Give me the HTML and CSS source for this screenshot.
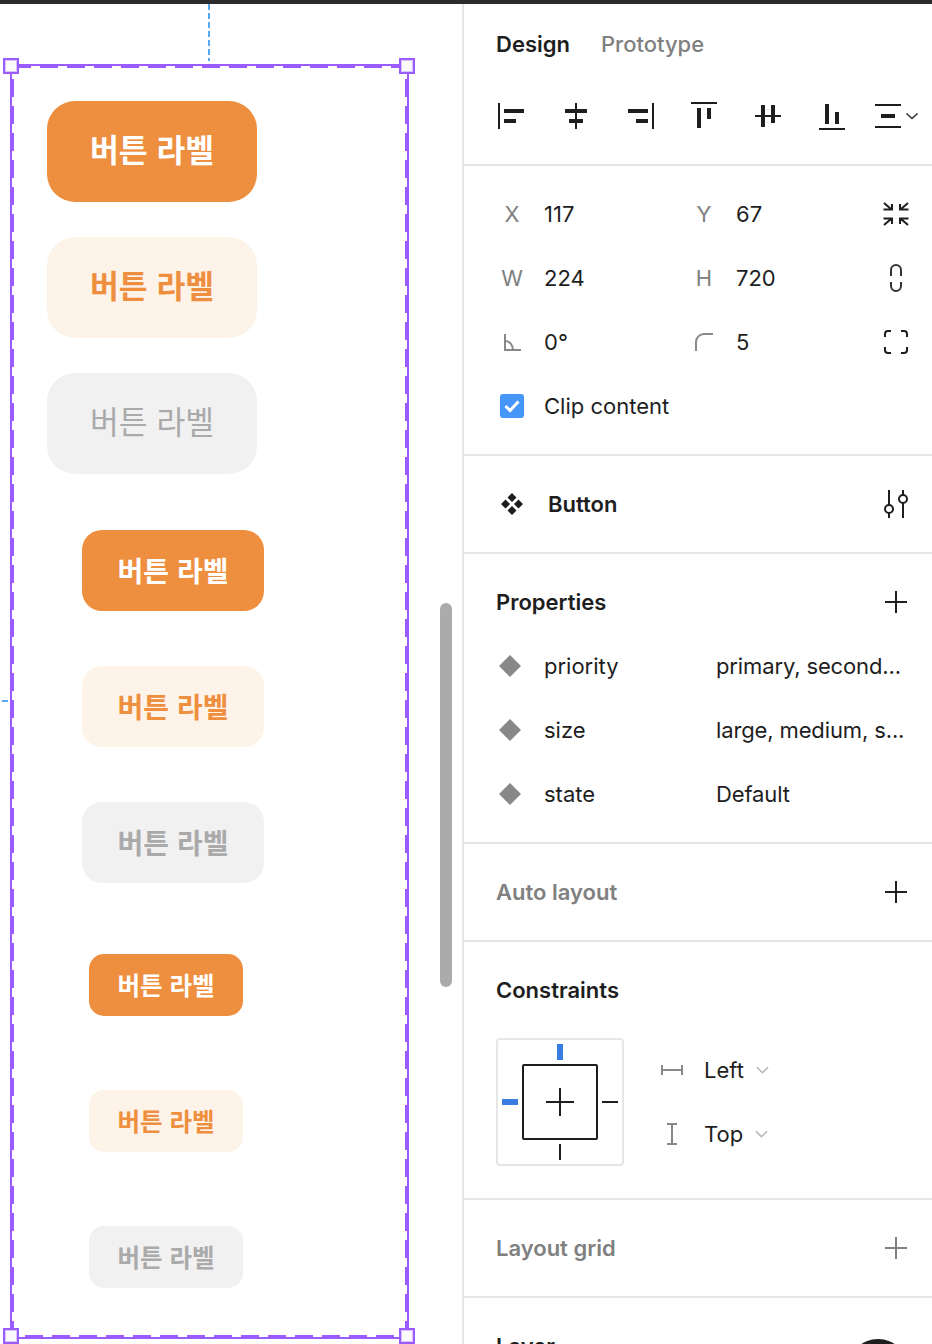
FILE: index.html
```html
<!DOCTYPE html>
<html lang="ko">
<head>
<meta charset="utf-8">
<title>Button</title>
<link rel="stylesheet" href="styles.css">
</head>
<body>
<div class="topbar"></div>
<div class="app">
  <main class="canvas">
    <div class="guide-top"></div>
    <div class="guide-left"></div>
    <div class="frame">
      <svg class="dash" width="395" height="1271" viewBox="0 0 395 1271"><rect x="1" y="1" width="393" height="1269" fill="none" stroke="#9b5cff" stroke-width="2" stroke-dasharray="18 9"/></svg>
      <span class="handle h-tl"></span><span class="handle h-tr"></span><span class="handle h-bl"></span><span class="handle h-br"></span>
      <div class="group group-lg">
        <button class="btn lg primary">버튼 라벨</button>
        <button class="btn lg secondary">버튼 라벨</button>
        <button class="btn lg tertiary">버튼 라벨</button>
      </div>
      <div class="group group-md">
        <button class="btn md primary">버튼 라벨</button>
        <button class="btn md secondary">버튼 라벨</button>
        <button class="btn md tertiary">버튼 라벨</button>
      </div>
      <div class="group group-sm">
        <button class="btn sm primary">버튼 라벨</button>
        <button class="btn sm secondary">버튼 라벨</button>
        <button class="btn sm tertiary">버튼 라벨</button>
      </div>
    </div>
    <div class="scrollbar"></div>
  </main>
  <aside class="panel">
    <section class="sec sec-tabs">
      <div class="tabs"><span class="tab active">Design</span><span class="tab">Prototype</span></div>
      <div class="aligns">
        <svg class="ic" viewBox="0 0 32 32"><path fill="#1e1e1e" d="M2 3h2v26H2zM8 9h20v4H8zM8 19h12v4H8z"/></svg>
        <svg class="ic" viewBox="0 0 32 32"><path fill="#1e1e1e" d="M15 3h2v26h-2zM5 9h22v4H5zM9 19h14v4H9z"/></svg>
        <svg class="ic" viewBox="0 0 32 32"><path fill="#1e1e1e" d="M28 3h2v26h-2zM4 9h20v4H4zM12 19h12v4H12z"/></svg>
        <svg class="ic" viewBox="0 0 32 32"><path fill="#1e1e1e" d="M3 2h26v2H3zM9 8h4v20H9zM19 8h4v11h-4z"/></svg>
        <svg class="ic" viewBox="0 0 32 32"><path fill="#1e1e1e" d="M3 15h26v2H3zM9 5h4v22H9zM19 5h4v18h-4z"/></svg>
        <svg class="ic" viewBox="0 0 32 32"><path fill="#1e1e1e" d="M3 28h26v2H3zM9 4h4v20H9zM19 12h4v12h-4z"/></svg>
        <svg class="ic ic-wide" viewBox="0 0 48 32"><path fill="#1e1e1e" d="M3 4h26v2H3zM3 26h26v2H3zM9 14h14v4H9z"/><path fill="none" stroke="#333" stroke-width="1.6" d="M34.500 13.500l5.500 5 5.500-5"/></svg>
      </div>
    </section>

    <section class="sec sec-geo">
      <div class="geo-row">
        <div class="cell"><span class="lab">X</span><span class="val">117</span></div>
        <div class="cell"><span class="lab">Y</span><span class="val">67</span></div>
        <svg class="ic" viewBox="0 0 32 32"><path fill="none" stroke="#1e1e1e" stroke-width="2" d="M4 5l7 6M3.500 11.500h8.500V6M28 5l-7 6M28.500 11.500H20V6M4 27l7-6M3.500 20.500H12V26M28 27l-7-6M28.500 20.500H20V26"/></svg>
      </div>
      <div class="geo-row">
        <div class="cell"><span class="lab">W</span><span class="val">224</span></div>
        <div class="cell"><span class="lab">H</span><span class="val">720</span></div>
        <svg class="ic" viewBox="0 0 32 32"><path fill="none" stroke="#333" stroke-width="2" d="M11 14V8a5 5 0 0 1 10 0v6M11 20v4a5 5 0 0 0 10 0v-4"/></svg>
      </div>
      <div class="geo-row">
        <div class="cell">
          <svg class="ic" viewBox="0 0 32 32"><path fill="none" stroke="#888" stroke-width="2" d="M9 8v16h16M9 15c4.500 0 8 4 8 9"/></svg>
          <span class="val">0°</span>
        </div>
        <div class="cell">
          <svg class="ic" viewBox="0 0 32 32"><path fill="none" stroke="#888" stroke-width="2" d="M8 25v-9a8 8 0 0 1 8-8h9"/></svg>
          <span class="val">5</span>
        </div>
        <svg class="ic" viewBox="0 0 32 32"><path fill="none" stroke="#1e1e1e" stroke-width="2" d="M5 11V8a3 3 0 0 1 3-3h3M21 5h3a3 3 0 0 1 3 3v3M27 21v3a3 3 0 0 1-3 3h-3M11 27H8a3 3 0 0 1-3-3v-3"/></svg>
      </div>
      <div class="geo-row">
        <div class="cell">
          <svg class="ic" viewBox="0 0 32 32"><rect x="4" y="4" width="24" height="24" rx="3" fill="#4596f8"/><path fill="none" stroke="#fff" stroke-width="3" d="M9.500 16l4.500 4.500 8.500-9"/></svg>
          <span class="val">Clip content</span>
        </div>
      </div>
    </section>

    <section class="sec sec-comp">
      <svg class="ic" viewBox="0 0 32 32"><path fill="#1e1e1e" d="M16 5l4.500 4.500L16 14l-4.500-4.500zM16 18l4.500 4.500L16 27l-4.500-4.500zM9.500 11.500L14 16l-4.500 4.500L5 16zM22.500 11.500L27 16l-4.500 4.500L18 16z"/></svg>
      <span class="comp-name">Button</span>
      <svg class="ic push" viewBox="0 0 32 32"><path fill="none" stroke="#1e1e1e" stroke-width="2" d="M9 2v15M9 25v5M23 2v5M23 15v15"/><circle cx="9" cy="21" r="4" fill="#fff" stroke="#1e1e1e" stroke-width="2"/><circle cx="23" cy="11" r="4" fill="#fff" stroke="#1e1e1e" stroke-width="2"/></svg>
    </section>

    <section class="sec sec-props">
      <div class="head"><h2 class="title">Properties</h2><svg class="ic" viewBox="0 0 32 32"><path fill="none" stroke="#1e1e1e" stroke-width="2" d="M5 16h22M16 5v22"/></svg></div>
      <div class="prop"><svg class="ic" viewBox="0 0 32 32"><path fill="#888" d="M14 5l11 11-11 11L3 16z"/></svg><span class="prop-name">priority</span><span class="val prop-val">primary, second...</span></div>
      <div class="prop"><svg class="ic" viewBox="0 0 32 32"><path fill="#888" d="M14 5l11 11-11 11L3 16z"/></svg><span class="prop-name">size</span><span class="val prop-val">large, medium, s...</span></div>
      <div class="prop"><svg class="ic" viewBox="0 0 32 32"><path fill="#888" d="M14 5l11 11-11 11L3 16z"/></svg><span class="prop-name">state</span><span class="val prop-val">Default</span></div>
    </section>

    <section class="sec sec-bar">
      <h2 class="title muted">Auto layout</h2>
      <svg class="ic" viewBox="0 0 32 32"><path fill="none" stroke="#1e1e1e" stroke-width="2" d="M5 16h22M16 5v22"/></svg>
    </section>

    <section class="sec sec-con">
      <div class="head"><h2 class="title">Constraints</h2></div>
      <div class="con-body">
        <svg class="con-box" width="128" height="128" viewBox="0 0 128 128">
          <rect x="1" y="1" width="126" height="126" rx="3" fill="#fff" stroke="#e6e6e6" stroke-width="2"/>
          <rect x="27" y="27" width="74" height="74" fill="none" stroke="#1e1e1e" stroke-width="2" rx="1"/>
          <path fill="none" stroke="#1e1e1e" stroke-width="2" d="M50 64h28M64 50v28M106 64h16M64 106v16"/>
          <path fill="#3a7de0" d="M61 6h6v16h-6zM6 61h16v6H6z"/>
        </svg>
        <div class="con-opts">
          <div class="con-opt">
            <svg class="ic" viewBox="0 0 32 32"><path fill="none" stroke="#888" stroke-width="2" d="M6 11v10M26 11v10M6 16h20"/></svg>
            <span class="val">Left</span>
            <svg class="chev" viewBox="0 0 14 8"><path fill="none" stroke="#b3b3b3" stroke-width="1.600" d="M1 1l6 6 6-6"/></svg>
          </div>
          <div class="con-opt">
            <svg class="ic" viewBox="0 0 32 32"><path fill="none" stroke="#888" stroke-width="2" d="M11 6h10M11 26h10M16 6v20"/></svg>
            <span class="val">Top</span>
            <svg class="chev" viewBox="0 0 14 8"><path fill="none" stroke="#b3b3b3" stroke-width="1.600" d="M1 1l6 6 6-6"/></svg>
          </div>
        </div>
      </div>
    </section>

    <section class="sec sec-bar">
      <h2 class="title muted">Layout grid</h2>
      <svg class="ic" viewBox="0 0 32 32"><path fill="none" stroke="#808080" stroke-width="2" d="M5 16h22M16 5v22"/></svg>
    </section>

    <section class="sec sec-layer">
      <h2 class="title">Layer</h2>
      <span class="layer-dot"></span>
    </section>
  </aside>
</div>
</body>
</html>
```
FILE: styles.css
```css
* { box-sizing: border-box; }
html, body { margin: 0; padding: 0; height: 1344px; overflow: hidden; background: #fff; }
body { font-family: Inter, "Noto Sans CJK KR", sans-serif; font-size: 22px; color: #1e1e1e; }

.topbar { height: 4px; background: #2c2c2c; }
.app { display: flex; height: 1340px; }

.canvas { position: relative; width: 462px; flex: none; padding: 60px 0 0 10px; background: #fff; overflow: hidden; }
.guide-top { position: absolute; left: 208px; top: 0; width: 2px; height: 57px; background: repeating-linear-gradient(to bottom, #5aa9f5 0 6px, transparent 6px 9px); }
.guide-left { position: absolute; left: 2px; top: 696px; width: 6px; height: 2px; background: #5aa9f5; }
.scrollbar { position: absolute; left: 440px; top: 599px; width: 12px; height: 384px; border-radius: 6px; background: #ababab; }

.frame { position: relative; width: 399px; height: 1275px; border: 2px solid #9b5cff; padding: 35px 0 0 35px; display: flex; flex-direction: column; }
.dash { position: absolute; left: 0; top: 0; }
.handle { position: absolute; width: 16px; height: 16px; background: #fafafa; border: 2px solid #9b5cff; box-shadow: 0 0 0 1px rgba(155, 92, 255, .35) inset; }
.h-tl { left: -9px; top: -8px; }
.h-tr { right: -8px; top: -8px; }
.h-bl { left: -9px; bottom: -7px; }
.h-br { right: -8px; bottom: -7px; }

.group { display: flex; flex-direction: column; align-items: flex-start; }
.group-lg { gap: 35px; }
.group-md { gap: 55px; margin: 56px 0 0 35px; }
.group-sm { gap: 74px; margin: 71px 0 0 42px; }

.btn { border: 0; display: flex; align-items: center; justify-content: center; font-family: "Noto Sans CJK KR", sans-serif; font-weight: 700; }
.lg { width: 210px; height: 101px; border-radius: 28px; font-size: 31.300px; padding: 0 0 6px; }
.md { width: 182px; height: 81px; border-radius: 20px; font-size: 28px; padding: 0 0 2px; }
.sm { width: 154px; height: 62px; border-radius: 15px; font-size: 24.500px; padding: 0 0 2px; }
.primary { background: #ee8f3f; color: #fff; }
.secondary { background: #fef3e8; color: #ee8f3f; }
.tertiary { background: #f1f1f1; color: #aaa; }
.lg.tertiary { font-weight: 400; }

.panel { flex: 1; min-width: 0; border-left: 2px solid #e6e6e6; }
.sec { border-bottom: 2px solid #e6e6e6; padding: 0 20px 0 32px; }
.sec:last-child { border-bottom: 0; }
.ic { display: block; flex: none; width: 32px; height: 32px; }
.ic-wide { width: 48px; margin-left: -8px; }
.val { line-height: 32px; white-space: nowrap; }
.prop-val { letter-spacing: -.13px; }

.sec-tabs { height: 162px; padding-top: 24px; }
.tabs { display: flex; gap: 31px; line-height: 32px; }
.tab { color: #808080; font-weight: 500; }
.tab.active { color: #1e1e1e; font-weight: 600; }
.aligns { display: flex; gap: 32px; margin-top: 40px; }

.sec-geo { height: 290px; padding-top: 16px; }
.geo-row { display: flex; align-items: center; height: 64px; }
.cell { display: flex; flex: none; align-items: center; gap: 16px; width: 192px; }
.lab { width: 32px; text-align: center; color: #808080; }

.sec-comp { height: 98px; display: flex; align-items: center; gap: 20px; }
.comp-name { font-weight: 600; }
.push { margin-left: auto; }

.sec-props { height: 290px; padding-top: 16px; }
.head { display: flex; align-items: center; justify-content: space-between; height: 64px; }
.title { margin: 0; font-size: 22px; font-weight: 600; }
.muted { color: #808080; }
.prop { display: flex; align-items: center; height: 64px; gap: 16px; }
.prop-name { width: 156px; }

.sec-bar { height: 98px; display: flex; align-items: center; justify-content: space-between; }

.sec-con { height: 258px; padding-top: 16px; }
.con-body { display: flex; gap: 32px; margin-top: 16px; }
.con-box { display: block; flex: none; }
.con-opt { display: flex; align-items: center; height: 64px; gap: 16px; }
.chev { display: block; width: 13px; height: 8px; margin-left: -4px; }

.sec-layer { height: 80px; padding-top: 35px; position: relative; }
.layer-dot { position: absolute; left: 384px; top: 41px; width: 60px; height: 60px; border-radius: 50%; background: #1e1e1e; }
```
